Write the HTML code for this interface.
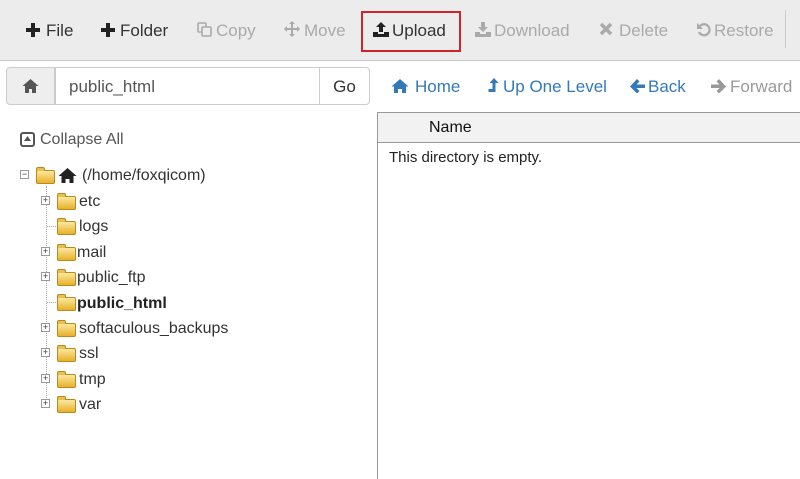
<!DOCTYPE html><html><head><style>
body{margin:0;width:800px;height:478px;overflow:hidden;background:#fff;font-family:"Liberation Sans",sans-serif;position:relative}
.a{position:absolute;white-space:nowrap}
.tb{position:absolute;left:0;top:0;width:800px;height:60px;background:#ececec;border-bottom:1px solid #c8c8c8}
.t{position:absolute;top:21px;font-size:17px;color:#333}
.g{color:#aaa}
.nav{position:absolute;top:77px;font-size:17px;color:#337ab7}
.tr{position:absolute;font-size:16px;color:#333;margin-top:1px}
svg{position:absolute}
.f{position:absolute;width:17px;height:12px;background:linear-gradient(#fbe9a0,#e8b12a);border:1px solid #b98a1a;border-radius:2px}
.f:before{content:"";position:absolute;left:-1px;top:-4px;width:7px;height:3px;background:#e9c050;border:1px solid #b98a1a;border-bottom:none;border-radius:2px 2px 0 0}
.x{position:absolute;width:7px;height:7px;border:1px solid #999;background:#fff;font-size:9px;line-height:7px;text-align:center;color:#333}
</style></head><body>
<div class="tb"></div>
<svg style="left:26px;top:23px" width="14" height="14"><path d="M5 0h4v5h5v4h-5v5h-4v-5h-5v-4h5z" fill="#222"/></svg>
<div class="t" style="left:46px">File</div>
<svg style="left:101px;top:23px" width="14" height="14"><path d="M5 0h4v5h5v4h-5v5h-4v-5h-5v-4h5z" fill="#222"/></svg>
<div class="t" style="left:120px">Folder</div>
<svg style="left:197px;top:22px" width="15" height="15" fill="none" stroke="#aaa" stroke-width="1.6"><rect x="1" y="1" width="8" height="9" rx="1"/><rect x="5" y="5" width="9" height="9" rx="1" fill="#ececec"/></svg>
<div class="t g" style="left:216px">Copy</div>
<svg style="left:284px;top:21px" width="16" height="16"><path d="M8 0l3 3h-2v4h4v-2l3 3-3 3v-2h-4v4h2l-3 3-3-3h2v-4h-4v2l-3-3 3-3v2h4v-4h-2z" fill="#aaa"/></svg>
<div class="t g" style="left:304px">Move</div>
<div class="a" style="left:361px;top:11px;width:96px;height:37px;border:2px solid #d2232a"></div>
<svg style="left:373px;top:22px" width="16" height="15"><path d="M8 0l5 5h-3v5h-4v-5h-3z M0 10h5v2h6v-2h5v5h-16z" fill="#222"/></svg>
<div class="t" style="left:392px">Upload</div>
<svg style="left:475px;top:22px" width="16" height="15"><path d="M6 0h4v5h3l-5 5-5-5h3z M0 10h5v2h6v-2h5v5h-16z" fill="#aaa"/></svg>
<div class="t g" style="left:494px">Download</div>
<svg style="left:599px;top:22px" width="14" height="14"><path d="M2 2l10 10M12 2l-10 10" stroke="#aaa" stroke-width="3.5"/></svg>
<div class="t g" style="left:619px">Delete</div>
<svg style="left:696px;top:22px" width="15" height="15"><path d="M4 4a5.5 5.5 0 1 1 -1 6" fill="none" stroke="#aaa" stroke-width="2.2"/><path d="M1 1v6h6z" fill="#aaa"/></svg>
<div class="t g" style="left:714px">Restore</div>
<div class="a" style="left:785px;top:10px;width:1px;height:38px;background:#ccc"></div>
<div class="a" style="left:6px;top:67px;width:48px;height:36px;background:#eee;border:1px solid #ccc;border-radius:4px 0 0 4px"></div>
<svg style="left:22px;top:78px" width="17" height="15"><path d="M8.5 1l8 7h-2.5v7h-4v-4h-3v4h-4v-7h-2.5z" fill="#555"/></svg>
<div class="a" style="left:54px;top:67px;width:266px;height:38px;border:1px solid #ccc;font-size:17px;line-height:37px;color:#555;padding-left:14px;box-sizing:border-box">public_html</div>
<div class="a" style="left:319px;top:67px;width:49px;height:36px;border:1px solid #ccc;border-radius:0 4px 4px 0;text-align:center;line-height:37px;font-size:17px;color:#333;background:#fff">Go</div>
<svg style="left:391px;top:78px" width="18" height="15"><path d="M9 1l8.5 7.5h-2.5v6.5h-4v-4h-4v4h-4v-6.5h-2.5z" fill="#337ab7"/></svg>
<div class="nav" style="left:415px">Home</div>
<svg style="left:488px;top:78px" width="11" height="16"><path d="M6 0l4.5 5h-3v9h-7v-3h4v-6h-3z" fill="#337ab7"/></svg>
<div class="nav" style="left:503px">Up One Level</div>
<svg style="left:630px;top:79px" width="15" height="14"><path d="M7 0l2.5 2.5-3 3h8.5v3.5h-8.5l3 3-2.5 2.5-7-7z" fill="#337ab7"/></svg>
<div class="nav" style="left:648px">Back</div>
<svg style="left:711px;top:79px" width="15" height="14"><path d="M8 0l-2.5 2.5 3 3h-8.5v3.5h8.5l-3 3 2.5 2.5 7-7z" fill="#999"/></svg>
<div class="nav" style="left:730px;color:#999">Forward</div>
<div class="a" style="left:377px;top:112px;width:423px;height:366px;border-left:1px solid #999;border-top:1px solid #999"></div>
<div class="a" style="left:378px;top:113px;width:422px;height:29px;background:#f2f2f2;border-bottom:1px solid #999"></div>
<div class="a" style="left:429px;top:119px;font-size:16px;color:#111">Name</div>
<div class="a" style="left:389px;top:149px;font-size:15px;color:#222">This directory is empty.</div>
<div class="a" style="left:20px;top:132px;width:11px;height:11px;border:2px solid #555;border-radius:3px"></div>
<svg style="left:23px;top:135px" width="9" height="8"><path d="M4.5 1l3.5 5h-7z" fill="#555"/></svg>
<div class="tr" style="left:40px;top:130px;color:#555">Collapse All</div>
<div class="a" style="left:46px;top:186px;height:220px;border-left:1px dotted #aaa"></div>
<div class="x" style="left:20px;top:170px">−</div>
<div class="f" style="left:36px;top:170px"></div>
<svg style="left:58px;top:167px" width="19" height="16"><path d="M9.5 1l9 8h-3v7h-4v-4h-4v4h-4v-7h-3z" fill="#222"/></svg>
<div class="tr" style="left:82px;top:166px">(/home/foxqicom)</div>
<div class="x" style="left:41px;top:196px">+</div><div class="f" style="left:57px;top:196px"></div><div class="tr" style="left:79px;top:192px">etc</div>
<div class="a" style="left:47px;top:226px;width:9px;border-top:1px dotted #aaa"></div><div class="f" style="left:57px;top:221px"></div><div class="tr" style="left:79px;top:217px">logs</div>
<div class="x" style="left:41px;top:247px">+</div><div class="f" style="left:57px;top:247px"></div><div class="tr" style="left:77px;top:243px">mail</div>
<div class="x" style="left:41px;top:272px">+</div><div class="f" style="left:57px;top:272px"></div><div class="tr" style="left:77px;top:268px">public_ftp</div>
<div class="a" style="left:47px;top:302px;width:9px;border-top:1px dotted #aaa"></div><div class="f" style="left:57px;top:297px"></div><div class="tr" style="left:77px;top:294px;font-weight:bold;color:#222">public_html</div>
<div class="x" style="left:41px;top:323px">+</div><div class="f" style="left:57px;top:323px"></div><div class="tr" style="left:79px;top:319px">softaculous_backups</div>
<div class="x" style="left:41px;top:348px">+</div><div class="f" style="left:57px;top:348px"></div><div class="tr" style="left:79px;top:344px">ssl</div>
<div class="x" style="left:41px;top:374px">+</div><div class="f" style="left:57px;top:374px"></div><div class="tr" style="left:79px;top:370px">tmp</div>
<div class="x" style="left:41px;top:399px">+</div><div class="f" style="left:57px;top:399px"></div><div class="tr" style="left:79px;top:395px">var</div>
</body></html>
